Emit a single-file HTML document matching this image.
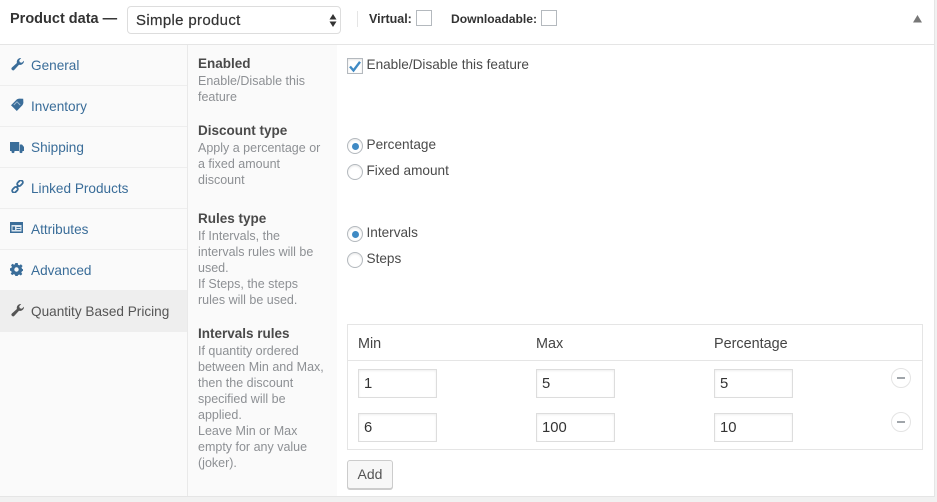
<!DOCTYPE html>
<html><head><meta charset="utf-8">
<style>
html,body{margin:0;padding:0;width:937px;height:502px;overflow:hidden;background:#fff;font-family:"Liberation Sans",sans-serif;color:#444;font-size:14px}
#w{left:0;top:0;width:937px;height:502px;background:#fff;filter:blur(.35px)}
div,svg,span{position:absolute;box-sizing:border-box}
.t{white-space:nowrap;line-height:16px}
.tab{left:31px;font-size:13.6px;color:#3a6d99;white-space:nowrap;line-height:16px}
.sep{left:0;width:187px;height:1px;background:#eeeeee}
.lb{left:198px;font-weight:bold;font-size:13.5px;color:#4a4a4a;white-space:nowrap;line-height:16px}
.d{left:198px;font-size:12.5px;color:#8d9094;line-height:16px;white-space:nowrap}
.r{width:16px;height:16px;border:1px solid #b4b9be;border-radius:50%;background:#fff;box-shadow:inset 0 1px 2px rgba(0,0,0,.1);left:347px}
.r i{position:absolute;left:3.5px;top:3.5px;width:7px;height:7px;border-radius:50%;background:#3f8ac4}
.in{width:79px;height:29px;border:1px solid #ddd;box-shadow:inset 0 1px 2px rgba(0,0,0,.07);background:#fff;font-size:14.8px;color:#333;line-height:29px;padding-left:5px}
.h{font-size:14.4px;color:#444;line-height:16px;white-space:nowrap;top:336px}
.m{width:20px;height:20px;left:891px;border:1px solid #e4e4e4;border-radius:50%;background:#fff}
.m i{position:absolute;left:5px;top:8px;width:8px;height:2px;background:#a0a5aa}
.o{left:366.5px;font-size:13.6px;color:#4a4a4a;white-space:nowrap;line-height:16px}
</style></head><body><div id="w">
<!-- panel frame -->
<div style="left:0;top:44px;width:937px;height:1px;background:#e5e5e5"></div>
<div style="left:934px;top:0;width:1px;height:497px;background:#e5e5e5"></div>
<div style="left:0;top:496px;width:935px;height:6px;background:#f1f1f1;border-top:1px solid #e5e5e5"></div>
<div style="left:935px;top:0;width:2px;height:502px;background:#f1f1f1"></div>

<!-- header -->
<div class="t" style="left:10px;top:11px;font-weight:bold;font-size:14.5px;color:#333">Product data —</div>
<div style="left:127px;top:6px;width:214px;height:28px;border:1px solid #ddd;border-radius:4px;background:#fff"></div>
<div class="t" style="left:136px;top:12.5px;font-size:15px;color:#333;letter-spacing:.33px;-webkit-text-stroke:.2px #333">Simple product</div>
<svg style="left:328px;top:13px" width="10" height="15" viewBox="0 0 10 15"><path d="M5 1L8.5 6.5H1.5Z M5 14L1.5 8.5H8.5Z" fill="#333"/></svg>
<div style="left:357px;top:11px;width:1px;height:16px;background:#e5e5e5"></div>
<div class="t" style="left:369px;top:11px;font-weight:bold;font-size:12.5px;color:#333">Virtual:</div>
<div style="left:416px;top:10px;width:16px;height:16px;border:1px solid #b4b9be;background:#fff"></div>
<div class="t" style="left:451px;top:11px;font-weight:bold;font-size:12.1px;color:#333">Downloadable:</div>
<div style="left:541px;top:10px;width:16px;height:16px;border:1px solid #b4b9be;background:#fff"></div>
<svg style="left:913px;top:15px" width="9" height="8" viewBox="0 0 9 8"><path d="M4.5 0L9 7.5H0Z" fill="#777"/></svg>

<!-- sidebar -->
<div style="left:0;top:45px;width:187px;height:451px;background:#fafafa"></div>
<div class="sep" style="top:85px"></div>
<div class="sep" style="top:126px"></div>
<div class="sep" style="top:167px"></div>
<div class="sep" style="top:208px"></div>
<div class="sep" style="top:249px"></div>
<div style="left:0;top:290px;width:187px;height:42px;background:#eeeeee"></div>

<svg style="left:11px;top:58px" width="13" height="13" viewBox="0 0 13 13"><path d="M13 2.8A4 4 0 0 1 8 6.8L3.4 11.8A1.6 1.6 0 0 1 .9 9.5L5.9 5A4 4 0 0 1 10.2 0L8.2 2.2 8.8 4.2 10.8 4.8Z" fill="#3a6d99"/></svg>
<div class="tab" style="top:58px">General</div>
<svg style="left:10px;top:98px" width="14" height="14" viewBox="0 0 14 14"><path d="M7 1.2L9 .6 13.2.8 13.4 5 12.6 7 6.8 13 1 7.2Z" fill="#3a6d99"/><path d="M3.8 7L7 3.8 10.2 7" stroke="#9db9d1" stroke-width="1" fill="none"/></svg>
<div class="tab" style="top:99px">Inventory</div>
<svg style="left:10px;top:141px" width="14" height="13" viewBox="0 0 14 13"><path d="M0 1h9.2v9H0Z M9.8 3.5H12L14 6V10H9.8Z" fill="#3a6d99"/><circle cx="3" cy="10.6" r="1.5" fill="#3a6d99"/><circle cx="11" cy="10.6" r="1.5" fill="#3a6d99"/></svg>
<div class="tab" style="top:140px">Shipping</div>
<svg style="left:11px;top:180px" width="13" height="13" viewBox="0 0 13 13" fill="none" stroke="#3a6d99" stroke-width="1.8"><rect x="5.8" y="1.2" width="6.4" height="4" rx="2" transform="rotate(-45 9 3.2)"/><rect x="0.8" y="7.8" width="6.4" height="4" rx="2" transform="rotate(-45 4 9.8)"/><path d="M5 8L8 5"/></svg>
<div class="tab" style="top:181px">Linked Products</div>
<svg style="left:10px;top:222px" width="13" height="11" viewBox="0 0 13 11"><path d="M0 0H13V11H0Z" fill="#3a6d99"/><path d="M1.5 3H11.5V9.5H1.5Z" fill="#dce6ef"/><path d="M2.5 4.5H5V8H2.5Z M6.5 5H10.5V6H6.5Z M6.5 7H10.5V8H6.5Z" fill="#3a6d99"/></svg>
<div class="tab" style="top:222px">Attributes</div>
<svg style="left:10px;top:263px" width="13" height="13" viewBox="0 0 13 13"><path d="M5.3 0H7.7L8 1.8 9.4 2.4 10.9 1.3 12.6 3 11.5 4.5 12.1 5.9 13 6.2V7.8L11.9 8.4 11.3 9.6 12.3 11 10.8 12.5 9.3 11.5 8 12.1 7.7 13H5.3L5 11.7 3.7 11.1 2.2 12.1.7 10.6 1.7 9.2 1.1 7.9 0 7.7V5.3L1.3 5 1.9 3.7 1 2.2 2.5.7 4 1.7 5 1.3Z" fill="#3a6d99"/><circle cx="6.5" cy="6.5" r="2.2" fill="#fafafa"/></svg>
<div class="tab" style="top:263px">Advanced</div>
<svg style="left:11px;top:304px" width="13" height="13" viewBox="0 0 13 13"><path d="M13 2.8A4 4 0 0 1 8 6.8L3.4 11.8A1.6 1.6 0 0 1 .9 9.5L5.9 5A4 4 0 0 1 10.2 0L8.2 2.2 8.8 4.2 10.8 4.8Z" fill="#555"/></svg>
<div class="tab" style="top:304px;color:#555">Quantity Based Pricing</div>

<!-- description column -->
<div style="left:187px;top:45px;width:150px;height:451px;background:#fafafa;border-left:1px solid #e9e9e9"></div>
<div class="lb" style="top:56px">Enabled</div>
<div class="d" style="top:73px">Enable/Disable this<br>feature</div>
<div class="lb" style="top:123px">Discount type</div>
<div class="d" style="top:140px">Apply a percentage or<br>a fixed amount<br>discount</div>
<div class="lb" style="top:211px">Rules type</div>
<div class="d" style="top:228px">If Intervals, the<br>intervals rules will be<br>used.<br>If Steps, the steps<br>rules will be used.</div>
<div class="lb" style="top:326px">Intervals rules</div>
<div class="d" style="top:343px">If quantity ordered<br>between Min and Max,<br>then the discount<br>specified will be<br>applied.<br>Leave Min or Max<br>empty for any value<br>(joker).</div>

<!-- options -->
<div style="left:347px;top:58px;width:16px;height:16px;border:1px solid #b4b9be;background:#fff;box-shadow:inset 0 1px 2px rgba(0,0,0,.1)"></div>
<svg style="left:348px;top:60px" width="14" height="13" viewBox="0 0 14 13"><path d="M2 6.5L5.5 10.5 12 1.8" fill="none" stroke="#3f8ac4" stroke-width="2.4"/></svg>
<div class="o" style="top:57px">Enable/Disable this feature</div>
<div class="r" style="top:138px"><i></i></div>
<div class="o" style="top:137px">Percentage</div>
<div class="r" style="top:164px"></div>
<div class="o" style="top:163px">Fixed amount</div>
<div class="r" style="top:226px"><i></i></div>
<div class="o" style="top:225px">Intervals</div>
<div class="r" style="top:252px"></div>
<div class="o" style="top:251px">Steps</div>

<!-- table -->
<div style="left:347px;top:324px;width:576px;height:126px;border:1px solid #e5e5e5"></div>
<div style="left:348px;top:360px;width:574px;height:1px;background:#e5e5e5"></div>
<div class="h" style="left:358px">Min</div>
<div class="h" style="left:536px">Max</div>
<div class="h" style="left:714px">Percentage</div>
<div class="in" style="left:358px;top:369px">1</div>
<div class="in" style="left:536px;top:369px">5</div>
<div class="in" style="left:714px;top:369px">5</div>
<div class="in" style="left:358px;top:413px">6</div>
<div class="in" style="left:536px;top:413px">100</div>
<div class="in" style="left:714px;top:413px">10</div>
<div class="m" style="top:368px"><i></i></div>
<div class="m" style="top:412px"><i></i></div>
<div style="left:347px;top:460px;width:46px;height:29px;border:1px solid #ccc;border-radius:3px;background:#f7f7f7;box-shadow:0 1px 0 #ccc;font-size:14px;color:#555;text-align:center;line-height:27px">Add</div>
</div></body></html>
